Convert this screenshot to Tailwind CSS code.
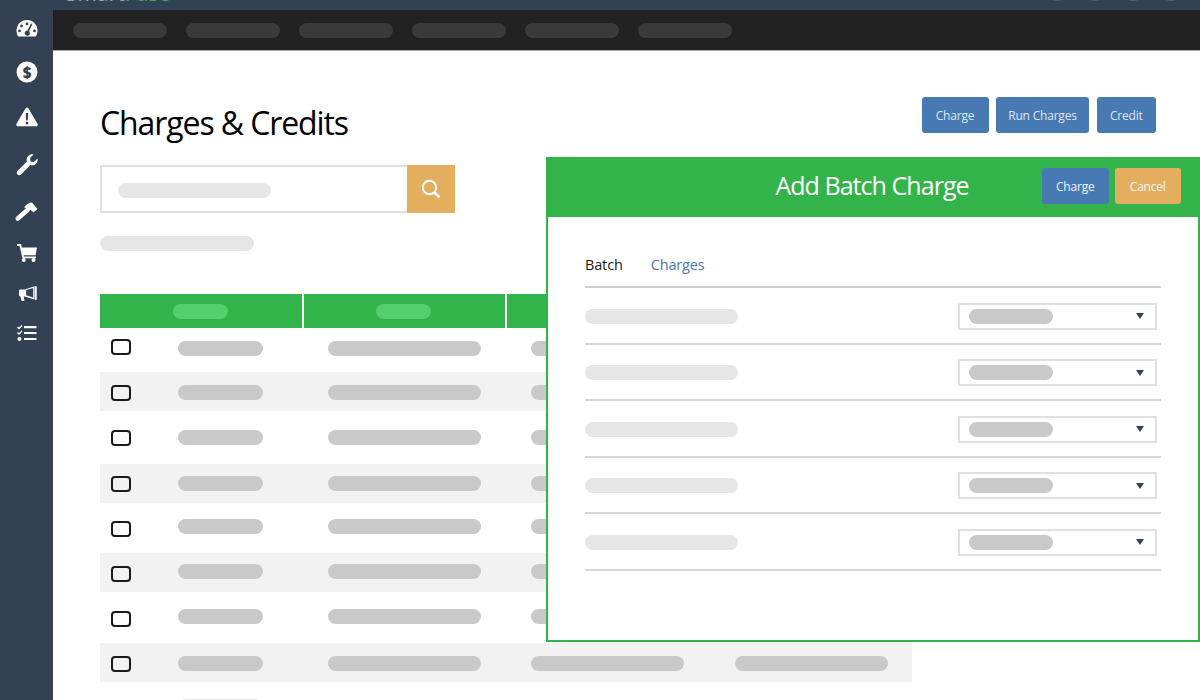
<!DOCTYPE html>
<html lang="en">
<head>
  <meta charset="UTF-8">
  <title>Charges &amp; Credits</title>
  <script src="https://cdn.jsdelivr.net/npm/@tailwindcss/browser@4"></script>
</head>
<body class="bg-white w-[1200px] h-[700px] overflow-hidden font-['Open_Sans',sans-serif] relative">
  <!-- top bar, mostly cut off -->
  <div class="h-[10px] bg-[#334155] relative overflow-hidden">
    <div class="absolute left-[66px] top-[-19px] text-[21px] leading-[24px] text-[#9aa5b1]">Smart<span class="text-[#33b44a]">Fuse</span></div>
    <div class="absolute left-[1043px] top-[-27px] flex gap-[10px]">
      <div class="size-[28px] rounded-full bg-[#4f6178]"></div>
      <div class="size-[28px] rounded-full bg-[#4f6178]"></div>
      <div class="size-[28px] rounded-full bg-[#4f6178]"></div>
      <div class="size-[28px] rounded-full bg-[#4f6178]"></div>
    </div>
  </div>

  <div class="flex h-[690px]">
    <!-- sidebar -->
    <aside class="w-[53px] shrink-0 bg-[#334155] text-white flex flex-col items-center">
      <svg class="mt-[9px]" width="22" height="20" viewBox="0 0 22 20" fill="currentColor">
        <path fill-rule="evenodd" d="M11 1C5 1 .5 5.800.5 11.500c0 2 .5 3.800 1.200 5.200.3.500.7.800 1.300.800h16c.6 0 1-.3 1.300-.8.7-1.400 1.200-3.200 1.200-5.200C21.500 5.800 17 1 11 1zM11 3.500a1.400 1.400 0 1 1 0 2.800 1.400 1.400 0 0 1 0-2.800zM5.500 5.500a1.400 1.400 0 1 1 0 2.800 1.400 1.400 0 0 1 0-2.800zM3.500 10.500a1.400 1.400 0 1 1 0 2.800 1.400 1.400 0 0 1 0-2.800zM18.500 10.500a1.400 1.400 0 1 1 0 2.800 1.400 1.400 0 0 1 0-2.800zM15 4.500l1.400.6-3.300 7.200a2.600 2.600 0 1 1-1.600-.7L15 4.500z"/>
      </svg>
      <svg class="mt-[22px]" width="22" height="22" viewBox="0 0 22 22">
        <circle cx="11" cy="11" r="10.500" fill="#fff"/>
        <text x="11" y="16.500" text-anchor="middle" font-family="Open Sans" font-weight="800" font-size="15" fill="#334155">$</text>
      </svg>
      <svg class="mt-[24px]" width="22" height="20" viewBox="0 0 22 20">
        <path fill="#fff" d="M11 .5c.6 0 1.100.3 1.400.8l9.200 15.700c.5 1-.2 2.300-1.400 2.300H1.800C.6 19.300-.1 18 .4 17L9.600 1.300c.3-.5.800-.8 1.400-.8z"/>
        <path fill="#334155" d="M9.800 6h2.400l-.4 7.500h-1.600zM9.800 14.800h2.400v2.400H9.800z"/>
      </svg>
      <svg class="mt-[27px]" width="22" height="22" viewBox="0 0 22 22" fill="#fff">
        <path d="M21.500 4.500c.4 1.900-.1 3.900-1.500 5.300-1.500 1.500-3.700 1.900-5.600 1.300L5 20.500c-1 1-2.500 1-3.500 0s-1-2.500 0-3.500l9.400-9.400C10.300 5.700 10.700 3.500 12.200 2c1.400-1.400 3.400-1.900 5.300-1.500l-3.500 3.600.6 3.300 3.300.6 3.600-3.500z"/>
      </svg>
      <svg class="mt-[26px]" width="23" height="20" viewBox="0 0 23 20" fill="#fff">
        <path d="M2.800 16.500 12.500 8" stroke="#fff" stroke-width="4.500" stroke-linecap="round"/>
        <path d="M9 5.500C11 2.500 14 .5 17 .5L22.500 7l-4 3.500-3.500-3-2 1.500-3-3.500z"/>
      </svg>
      <svg class="mt-[22px]" width="20" height="18" viewBox="0 0 20 18" fill="none">
        <path fill="#fff" d="M4.500 3.500H20l-1.500 7.800H6.200z"/>
        <path stroke="#fff" stroke-width="1.800" d="M0 1h3.300l2.900 12.400h12.800"/>
        <circle cx="6.700" cy="16" r="2" fill="#fff"/>
        <circle cx="16.500" cy="16" r="2" fill="#fff"/>
      </svg>
      <svg class="mt-[24px] ml-[2px]" width="18" height="15" viewBox="0 0 19 16" fill="#fff">
        <path d="M0 5c0-.8.600-1.300 1.300-1.300H6L16.500.3v14.200L6 11.200H4.800l.9 3.800c.1.500-.2.900-.7.900H3.200c-.4 0-.7-.2-.8-.6l-1-4.100H1.300C.6 11.200 0 10.600 0 9.900z"/>
        <rect x="17" y="0" width="1.800" height="15" rx=".9"/>
        <path fill="#334155" d="M7.500 4.300 15 2.200v10L7.500 9.900z"/>
      </svg>
      <svg class="mt-[24px]" width="20" height="16" viewBox="0 0 20 16" fill="none" stroke="#fff">
        <path stroke-width="1.300" d="M.5 2 2 3.500 5 .5M.5 7.500 2 9 5 6"/>
        <circle cx="2.500" cy="14" r="2" fill="#fff" stroke="none"/>
        <path stroke-width="2.200" d="M7 2.200h12.500M7 8h12.500M7 14h12.500"/>
      </svg>
    </aside>

    <div class="flex-1 min-w-0 relative">
      <!-- dark nav -->
      <nav class="h-[41px] bg-[#222] border-b border-[#aaa] flex items-center pl-[20px] gap-[19px]">
        <div class="w-[94px] h-[15px] rounded-full bg-[#3a3a3a]"></div>
        <div class="w-[94px] h-[15px] rounded-full bg-[#3a3a3a]"></div>
        <div class="w-[94px] h-[15px] rounded-full bg-[#3a3a3a]"></div>
        <div class="w-[94px] h-[15px] rounded-full bg-[#3a3a3a]"></div>
        <div class="w-[94px] h-[15px] rounded-full bg-[#3a3a3a]"></div>
        <div class="w-[94px] h-[15px] rounded-full bg-[#3a3a3a]"></div>
      </nav>

      <main class="pl-[47px] pr-[44px]">
        <div class="flex justify-between items-start">
          <h1 class="mt-[52px] text-[32px] leading-[40px] text-black tracking-[-1.1px]">Charges &amp; Credits</h1>
          <div class="mt-[46px] flex gap-[7.5px] text-[12px] text-[#dce6f2] tracking-[-0.2px]">
            <button class="w-[67px] h-[36px] pt-[1px] rounded-[3px] bg-[#4779b3]">Charge</button>
            <button class="w-[93px] h-[36px] pt-[1px] rounded-[3px] bg-[#4779b3]">Run Charges</button>
            <button class="w-[59.5px] h-[36px] pt-[1px] rounded-[3px] bg-[#4779b3]">Credit</button>
          </div>
        </div>

        <div class="mt-[22px] flex w-[355px] h-[48px]">
          <div class="flex-1 border-2 border-[#e0e0e0] border-r-0 flex items-center pl-[16px] pt-[2px]">
            <div class="w-[153px] h-[15px] rounded-full bg-[#e6e6e6]"></div>
          </div>
          <button class="w-[48px] bg-[#e4ae5f] flex items-center justify-center">
            <svg width="20" height="20" viewBox="0 0 20 20" fill="none" stroke="#fff">
              <circle cx="8.500" cy="8.500" r="6.700" stroke-width="2"/>
              <path stroke-width="2.600" stroke-linecap="round" d="m13.700 13.700 4 3.800"/>
            </svg>
          </button>
        </div>

        <div class="mt-[23px] w-[154px] h-[15px] rounded-full bg-[#e6e6e6]"></div>

        <!-- table -->
        <div class="mt-[43px] w-[812px]">
          <div class="grid grid-cols-[204px_203px_203px_202px] h-[34px] bg-[#33b44a]">
            <div class="flex items-center justify-center border-r-2 border-white pr-[1px]"><div class="w-[55px] h-[15px] rounded-full bg-[#53cf6c]"></div></div>
            <div class="flex items-center justify-center border-r-2 border-white pr-[2px]"><div class="w-[55px] h-[15px] rounded-full bg-[#53cf6c]"></div></div>
            <div class="flex items-center justify-center border-r-2 border-white"><div class="w-[55px] h-[15px] rounded-full bg-[#53cf6c]"></div></div>
            <div class="flex items-center justify-center"><div class="w-[55px] h-[15px] rounded-full bg-[#53cf6c]"></div></div>
          </div>
          <div class="h-[44px] flex items-center pl-[11px] pb-[4px]">
            <div class="w-[20px] h-[16px] rounded-[4px] border-2 border-[#1a1a1a] -translate-y-[1px]"></div>
            <div class="ml-[47px] w-[85px] h-[15px] rounded-full bg-[#c9c9c9]"></div>
            <div class="ml-[65px] w-[153px] h-[15px] rounded-full bg-[#c9c9c9]"></div>
            <div class="ml-[50px] w-[153px] h-[15px] rounded-full bg-[#c9c9c9]"></div>
            <div class="ml-[51px] w-[153px] h-[15px] rounded-full bg-[#c9c9c9]"></div>
          </div>
          <div class="h-[39px] flex items-center pl-[11px] pt-[1px] bg-[#f2f2f2]">
            <div class="w-[20px] h-[16px] rounded-[4px] border-2 border-[#1a1a1a] translate-y-[1px]"></div>
            <div class="ml-[47px] w-[85px] h-[15px] rounded-full bg-[#c9c9c9]"></div>
            <div class="ml-[65px] w-[153px] h-[15px] rounded-full bg-[#c9c9c9]"></div>
            <div class="ml-[50px] w-[153px] h-[15px] rounded-full bg-[#c9c9c9]"></div>
            <div class="ml-[51px] w-[153px] h-[15px] rounded-full bg-[#c9c9c9]"></div>
          </div>
          <div class="h-[53px] flex items-center pl-[11px] pb-[1px]">
            <div class="w-[20px] h-[16px] rounded-[4px] border-2 border-[#1a1a1a] translate-y-[1px]"></div>
            <div class="ml-[47px] w-[85px] h-[15px] rounded-full bg-[#c9c9c9]"></div>
            <div class="ml-[65px] w-[153px] h-[15px] rounded-full bg-[#c9c9c9]"></div>
            <div class="ml-[50px] w-[153px] h-[15px] rounded-full bg-[#c9c9c9]"></div>
            <div class="ml-[51px] w-[153px] h-[15px] rounded-full bg-[#c9c9c9]"></div>
          </div>
          <div class="h-[39px] flex items-center pl-[11px] pb-[1px] bg-[#f2f2f2]">
            <div class="w-[20px] h-[16px] rounded-[4px] border-2 border-[#1a1a1a] translate-y-[1px]"></div>
            <div class="ml-[47px] w-[85px] h-[15px] rounded-full bg-[#c9c9c9]"></div>
            <div class="ml-[65px] w-[153px] h-[15px] rounded-full bg-[#c9c9c9]"></div>
            <div class="ml-[50px] w-[153px] h-[15px] rounded-full bg-[#c9c9c9]"></div>
            <div class="ml-[51px] w-[153px] h-[15px] rounded-full bg-[#c9c9c9]"></div>
          </div>
          <div class="h-[50px] flex items-center pl-[11px] pb-[4px]">
            <div class="w-[20px] h-[16px] rounded-[4px] border-2 border-[#1a1a1a] translate-y-[3px]"></div>
            <div class="ml-[47px] w-[85px] h-[15px] rounded-full bg-[#c9c9c9]"></div>
            <div class="ml-[65px] w-[153px] h-[15px] rounded-full bg-[#c9c9c9]"></div>
            <div class="ml-[50px] w-[153px] h-[15px] rounded-full bg-[#c9c9c9]"></div>
            <div class="ml-[51px] w-[153px] h-[15px] rounded-full bg-[#c9c9c9]"></div>
          </div>
          <div class="h-[39px] flex items-center pl-[11px] pb-[3px] bg-[#f2f2f2]">
            <div class="w-[20px] h-[16px] rounded-[4px] border-2 border-[#1a1a1a] translate-y-[3px]"></div>
            <div class="ml-[47px] w-[85px] h-[15px] rounded-full bg-[#c9c9c9]"></div>
            <div class="ml-[65px] w-[153px] h-[15px] rounded-full bg-[#c9c9c9]"></div>
            <div class="ml-[50px] w-[153px] h-[15px] rounded-full bg-[#c9c9c9]"></div>
            <div class="ml-[51px] w-[153px] h-[15px] rounded-full bg-[#c9c9c9]"></div>
          </div>
          <div class="h-[51px] flex items-center pl-[11px] pb-[3px]">
            <div class="w-[20px] h-[16px] rounded-[4px] border-2 border-[#1a1a1a] translate-y-[3px]"></div>
            <div class="ml-[47px] w-[85px] h-[15px] rounded-full bg-[#c9c9c9]"></div>
            <div class="ml-[65px] w-[153px] h-[15px] rounded-full bg-[#c9c9c9]"></div>
            <div class="ml-[50px] w-[153px] h-[15px] rounded-full bg-[#c9c9c9]"></div>
            <div class="ml-[51px] w-[153px] h-[15px] rounded-full bg-[#c9c9c9]"></div>
          </div>
          <div class="h-[39px] flex items-center pl-[11px] pt-[1px] bg-[#f2f2f2]">
            <div class="w-[20px] h-[16px] rounded-[4px] border-2 border-[#1a1a1a] translate-y-[1px]"></div>
            <div class="ml-[47px] w-[85px] h-[15px] rounded-full bg-[#c9c9c9]"></div>
            <div class="ml-[65px] w-[153px] h-[15px] rounded-full bg-[#c9c9c9]"></div>
            <div class="ml-[50px] w-[153px] h-[15px] rounded-full bg-[#c9c9c9]"></div>
            <div class="ml-[51px] w-[153px] h-[15px] rounded-full bg-[#c9c9c9]"></div>
          </div>
          <!-- next row, cut by the window -->
          <div class="h-[40px] pt-[17px] pl-[78px]">
            <div class="w-[85px] h-[15px] rounded-full bg-[#e6e6e6]"></div>
          </div>
        </div>
      </main>

      <!-- batch charge panel over the table -->
      <section class="absolute left-[493px] top-[147px] w-[654px] h-[485px] bg-white border-2 border-[#33b44a]">
        <header class="h-[58px] bg-[#33b44a] flex items-center pb-[4px] relative">
          <h2 class="w-full text-center text-[25px] text-white tracking-[-0.95px] pr-[2px]">Add Batch Charge</h2>
          <div class="absolute left-[494px] top-[9px] flex gap-[6px] text-[12px] text-[#eef3f8] tracking-[-0.2px]">
            <button class="w-[66.5px] h-[36px] pt-[1px] rounded-[3px] bg-[#4779b3]">Charge</button>
            <button class="w-[66.5px] h-[36px] pt-[1px] rounded-[3px] bg-[#e4ae5f]">Cancel</button>
          </div>
        </header>
        <div class="ml-[37px] w-[576px]">
          <div class="h-[71px] flex items-end gap-[28px] pb-[11px] border-b-2 border-[#cfcfcf] text-[14.5px] leading-[20px] tracking-[-0.15px]">
            <span class="text-[#1a1a1a]">Batch</span>
            <span class="text-[#4779b3]">Charges</span>
          </div>
          <div class="h-[56.5px] flex items-center justify-between pt-[2px] pr-[4px] border-b-2 border-[#d6d6d6]">
            <div class="w-[153px] h-[15px] rounded-full bg-[#e6e6e6]"></div>
            <div class="w-[199px] h-[27px] border-2 border-[#e0e0e0] flex items-center justify-between pl-[9px] pr-[11px]">
              <div class="w-[84px] h-[15px] rounded-full bg-[#c9c9c9]"></div>
              <div class="w-0 h-0 border-x-[4px] border-x-transparent border-t-[6px] border-t-[#334155]"></div>
            </div>
          </div>
          <div class="h-[56.5px] flex items-center justify-between pt-[2px] pr-[4px] border-b-2 border-[#d6d6d6]">
            <div class="w-[153px] h-[15px] rounded-full bg-[#e6e6e6]"></div>
            <div class="w-[199px] h-[27px] border-2 border-[#e0e0e0] flex items-center justify-between pl-[9px] pr-[11px]">
              <div class="w-[84px] h-[15px] rounded-full bg-[#c9c9c9]"></div>
              <div class="w-0 h-0 border-x-[4px] border-x-transparent border-t-[6px] border-t-[#334155]"></div>
            </div>
          </div>
          <div class="h-[56.5px] flex items-center justify-between pt-[2px] pr-[4px] border-b-2 border-[#d6d6d6]">
            <div class="w-[153px] h-[15px] rounded-full bg-[#e6e6e6]"></div>
            <div class="w-[199px] h-[27px] border-2 border-[#e0e0e0] flex items-center justify-between pl-[9px] pr-[11px]">
              <div class="w-[84px] h-[15px] rounded-full bg-[#c9c9c9]"></div>
              <div class="w-0 h-0 border-x-[4px] border-x-transparent border-t-[6px] border-t-[#334155]"></div>
            </div>
          </div>
          <div class="h-[56.5px] flex items-center justify-between pt-[2px] pr-[4px] border-b-2 border-[#d6d6d6]">
            <div class="w-[153px] h-[15px] rounded-full bg-[#e6e6e6]"></div>
            <div class="w-[199px] h-[27px] border-2 border-[#e0e0e0] flex items-center justify-between pl-[9px] pr-[11px]">
              <div class="w-[84px] h-[15px] rounded-full bg-[#c9c9c9]"></div>
              <div class="w-0 h-0 border-x-[4px] border-x-transparent border-t-[6px] border-t-[#334155]"></div>
            </div>
          </div>
          <div class="h-[56.5px] flex items-center justify-between pt-[2px] pr-[4px] border-b-2 border-[#d6d6d6]">
            <div class="w-[153px] h-[15px] rounded-full bg-[#e6e6e6]"></div>
            <div class="w-[199px] h-[27px] border-2 border-[#e0e0e0] flex items-center justify-between pl-[9px] pr-[11px]">
              <div class="w-[84px] h-[15px] rounded-full bg-[#c9c9c9]"></div>
              <div class="w-0 h-0 border-x-[4px] border-x-transparent border-t-[6px] border-t-[#334155]"></div>
            </div>
          </div>
        </div>
      </section>
    </div>
  </div>
</body>
</html>
